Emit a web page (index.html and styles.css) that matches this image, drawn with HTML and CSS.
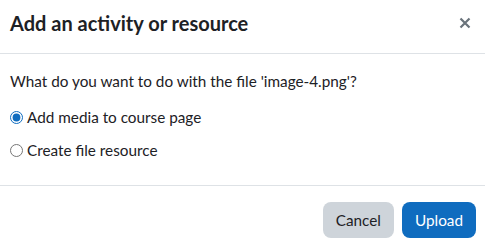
FILE: index.html
```html
<!DOCTYPE html>
<html lang="en">

<head>
    <title>Add an activity or resource</title>
    <link rel="stylesheet" href="styles.css">
</head>

<body>
    <div class="modal">
        <div class="modal-header">
            <h5 class="modal-title">Add an activity or resource</h5>
            <button class="close" type="button" aria-label="Close">
                <svg width="12" height="12" viewBox="0 0 12 12">
                    <path d="M1.5 1.5 L10.5 10.5 M10.5 1.5 L1.5 10.5" stroke="#6a737b" stroke-width="2.2" />
                </svg>
            </button>
        </div>
        <div class="modal-body">
            <p>What do you want to do with the file 'image-4.png'?</p>
            <label class="option">
                <input type="radio" name="action" value="media" checked />
                Add media to course page
            </label>
            <label class="option">
                <input type="radio" name="action" value="resource" />
                Create file resource
            </label>
        </div>
        <div class="modal-footer">
            <button class="btn btn-secondary" type="button">Cancel</button>
            <button class="btn btn-primary" type="button">Upload</button>
        </div>
    </div>
</body>

</html>
```

FILE: styles.css
```css
body {
    font-family: Lato, "Noto Sans", sans-serif;
    font-size: 15.3px;
    color: #1d2125;
    background-color: #fff;
    margin: 0;
    padding: 0;
}

.modal {
    width: 485px;
}

.modal-header {
    display: flex;
    justify-content: space-between;
    align-items: center;
    height: 54px;
    padding: 0 14px 7px 10px;
    box-sizing: border-box;
    border-bottom: 1px solid #dee2e6;
}

.modal-title {
    margin: 0;
    font-size: 20px;
    font-weight: bold;
    line-height: 24px;
}

.close {
    background: none;
    border: none;
    padding: 0;
    display: flex;
    cursor: pointer;
}

.modal-body {
    padding: 16px 10px 24px;
}

.modal-body p {
    margin: 0 0 14px;
    line-height: 22px;
}

.option {
    display: flex;
    align-items: center;
    line-height: 22px;
    margin-bottom: 11px;
}

.option:last-child {
    margin-bottom: 0;
}

.option input {
    width: 13px;
    height: 13px;
    margin: 0 4px 0 0;
    accent-color: #0f6cbf;
}

.modal-footer {
    display: flex;
    justify-content: flex-end;
    gap: 8px;
    padding: 16px 9px 0;
    border-top: 1px solid #dee2e6;
}

.btn {
    font-family: inherit;
    font-size: 15.3px;
    height: 36px;
    padding: 0 13px;
    border: none;
    border-radius: 8px;
    cursor: pointer;
}

.btn-secondary {
    background-color: #ced4da;
    color: #1d2125;
}

.btn-primary {
    background-color: #0f6cbf;
    color: #fff;
}
```
